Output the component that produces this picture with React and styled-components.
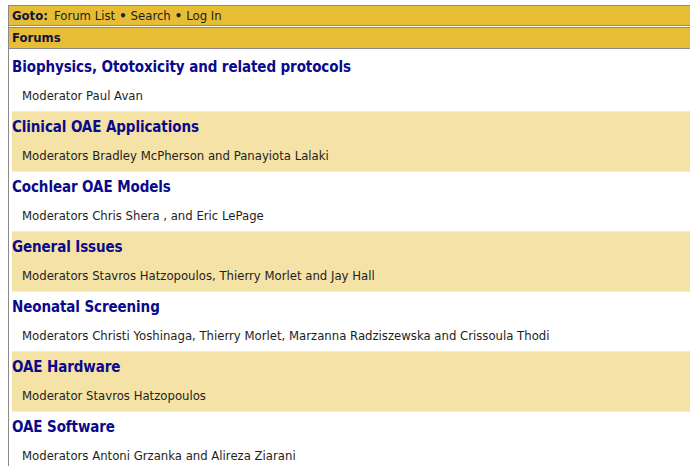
import React from "react";
import styled, { createGlobalStyle } from "styled-components";

const Global = createGlobalStyle`
  html, body { margin: 0; padding: 0; background: #fff; overflow: hidden; }
  body { font-family: "DejaVu Sans", Verdana, sans-serif; }
`;

const Page = styled.div`
  padding: 5px 0 0 8px;
  width: 720px;
`;

const Frame = styled.div`
  border-left: 1px solid #8a8a8a;
  min-height: 470px;
`;

const Bar = styled.div`
  background: #e7bd35;
  border-top: 1px solid #8a8a8a;
  border-bottom: 1px solid #8a8a8a;
  height: ${(p) => p.$h}px;
  margin-bottom: ${(p) => p.$mb || 0}px;
  display: flex;
  align-items: center;
  padding-left: 3px;
  font-size: 11.7px;
  color: #1c1c2c;
  white-space: pre;
`;

const Bold = styled.span`
  font-weight: bold;
  color: #10143a;
  margin-right: ${(p) => p.$mr || 0}px;
`;

const NavLink = styled.span`
  color: #1c1c1c;
`;

const Dot = styled.span`
  margin: 0 4px;
  font-weight: bold;
`;

const List = styled.div`
  padding: 2px 0 0 3px;
  display: flex;
  flex-direction: column;
`;

const Row = styled.div`
  background: ${(p) => (p.$alt ? "#f5e2a6" : "#fff")};
  height: 60px;
  border-top: ${(p) => (p.$first ? "none" : "1px solid #ececec")};
  display: flex;
  flex-direction: column;
  padding: ${(p) => (p.$first ? 6 : 5)}px 0 0 0;
  box-sizing: border-box;
`;

const Title = styled.div`
  font-family: "DejaVu Sans Condensed", "DejaVu Sans", sans-serif;
  font-stretch: condensed;
  font-size: 15px;
  font-weight: bold;
  letter-spacing: -0.1px;
  color: #0a0a8a;
  line-height: 20px;
`;

const Mods = styled.div`
  font-size: 11.7px;
  color: #1e1e1e;
  margin-top: 12px;
  padding-left: 10px;
  line-height: 15px;
`;

const forums = [
  ["Biophysics, Ototoxicity and related protocols", "Moderator Paul Avan"],
  ["Clinical OAE Applications", "Moderators Bradley McPherson and Panayiota Lalaki"],
  ["Cochlear OAE Models", "Moderators Chris Shera , and Eric LePage"],
  ["General Issues", "Moderators Stavros Hatzopoulos, Thierry Morlet and Jay Hall"],
  [
    "Neonatal Screening",
    "Moderators Christi Yoshinaga, Thierry Morlet, Marzanna Radziszewska and Crissoula Thodi",
  ],
  ["OAE Hardware", "Moderator Stavros Hatzopoulos"],
  ["OAE Software", "Moderators Antoni Grzanka and Alireza Ziarani"],
];

export default function App() {
  return (
    <>
      <Global />
      <Page>
        <Frame>
          <Bar $h={19} $mb={1}>
            <Bold $mr={6}>Goto:</Bold>
            <NavLink>Forum List</NavLink>
            <Dot>•</Dot>
            <NavLink>Search</NavLink>
            <Dot>•</Dot>
            <NavLink>Log In</NavLink>
          </Bar>
          <Bar $h={20}>
            <Bold>Forums</Bold>
          </Bar>
          <List>
            {forums.map(([t, m], i) => (
              <Row key={t} $alt={i % 2 === 1} $first={i === 0}>
                <Title>{t}</Title>
                <Mods>{m}</Mods>
              </Row>
            ))}
          </List>
        </Frame>
      </Page>
    </>
  );
}
